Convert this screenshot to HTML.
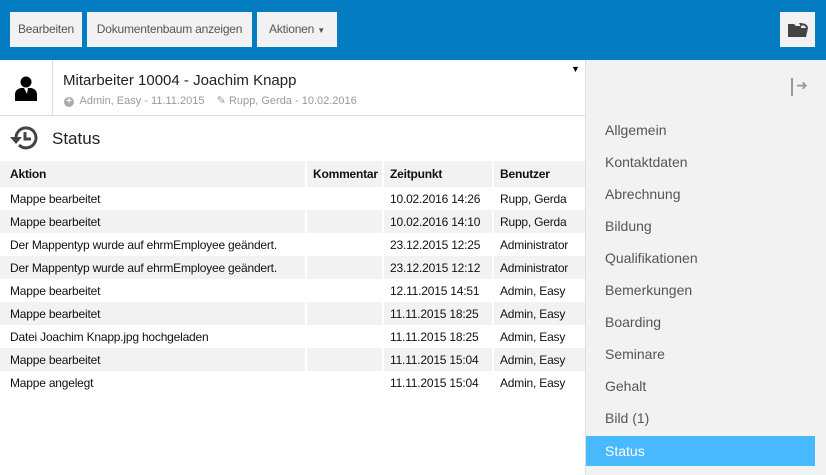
<!DOCTYPE html>
<html><head><style>
*{margin:0;padding:0;box-sizing:border-box}
body{width:826px;height:475px;overflow:hidden;font-family:"Liberation Sans",sans-serif;background:#fff;position:relative;color:#222}
.top{position:absolute;left:0;top:0;width:826px;height:60px;background:#037cc2}
.btn{position:absolute;top:12px;height:35px;background:#f2f2f2;color:#555;font-size:12px;line-height:35px;text-align:center;white-space:nowrap;letter-spacing:-0.2px}
.side{position:absolute;left:585px;top:60px;width:241px;height:415px;background:#f2f2f2;border-left:1px solid #ddd}
.side .it{position:absolute;left:19px;font-size:14px;color:#555}
.sel{position:absolute;left:0;top:376px;width:229px;height:30px;background:#47b9fc;color:#fff;font-size:14px;line-height:30px;padding-left:19px}
.hdr{position:absolute;left:0;top:60px;width:585px;height:56px;border-bottom:1px solid #ddd}
table{position:absolute;left:0;top:161px;width:585px;border-collapse:collapse;font-size:12px;table-layout:fixed;letter-spacing:-0.2px}
th{background:#f2f2f2;text-align:left;font-weight:bold;height:26px;padding:0 0 0 6px;border-left:2px solid #fff;color:#111;white-space:nowrap;overflow:hidden}
td{height:23px;padding:0 0 0 6px;border-left:2px solid #fff;color:#111;white-space:nowrap;overflow:hidden}
tr:nth-child(odd) td{background:#f2f2f2}
tr td:first-child,tr th:first-child{border-left:none;padding-left:10px}
</style></head><body>
<div class="top">
<div class="btn" style="left:10px;width:72px">Bearbeiten</div>
<div class="btn" style="left:87px;width:165px">Dokumentenbaum anzeigen</div>
<div class="btn" style="left:257px;width:80px">Aktionen <span style="font-size:8px">▼</span></div>
<div class="btn" style="left:780px;width:35px"><svg width="22" height="18" viewBox="0 0 22 18" style="margin-top:9px"><path d="M1 3h6l2 2h5v11H1z" fill="#444"/><path d="M3 7h18l-2 9H1z" fill="#444"/><path d="M14 4a4 4 0 0 1 6 3" stroke="#444" stroke-width="2" fill="none"/><path d="M12 2l3 0-1 4z" fill="#444"/></svg></div>
</div>
<div class="hdr">
<div style="position:absolute;left:52px;top:0;width:1px;height:55px;background:#ddd"></div>
<svg style="position:absolute;left:15px;top:16px" width="22" height="25" viewBox="0 0 22 25"><circle cx="11" cy="6" r="5.5" fill="#000"/><path d="M0 25v-6q0-6 6-7h10q6 1 6 7v6z" fill="#000"/><path d="M9 12h4l-1 6z" fill="#fff"/></svg>
<div style="position:absolute;left:63px;top:12px;font-size:15px;color:#222">Mitarbeiter 10004 - Joachim Knapp</div>
<div style="position:absolute;left:64px;top:34px;font-size:11px;color:#999;white-space:nowrap"><span style="display:inline-block;width:10px;height:10px;border-radius:50%;background:#aaa;color:#fff;font-size:10px;line-height:10px;text-align:center;font-weight:bold">+</span>&nbsp; Admin, Easy - 11.11.2015 &nbsp;&nbsp; ✎ Rupp, Gerda - 10.02.2016</div>
<div style="position:absolute;left:571px;top:4px;font-size:9px;color:#000">▼</div>
</div>
<svg style="position:absolute;left:10px;top:125px" width="30" height="26" viewBox="0 0 30 26"><path d="M6 13a10 10 0 1 1 3 7" stroke="#444" stroke-width="3" fill="none"/><path d="M0 12h12l-6 7z" fill="#444"/><path d="M15 7v7h6" stroke="#444" stroke-width="3" fill="none"/></svg>
<div style="position:absolute;left:52px;top:129px;font-size:17px;color:#222">Status</div>
<table>
<colgroup><col style="width:306px"><col style="width:77px"><col style="width:110px"><col style="width:92px"></colgroup>
<tr><th>Aktion</th><th>Kommentar</th><th>Zeitpunkt</th><th>Benutzer</th></tr>
<tr><td>Mappe bearbeitet</td><td></td><td>10.02.2016 14:26</td><td>Rupp, Gerda</td></tr>
<tr><td>Mappe bearbeitet</td><td></td><td>10.02.2016 14:10</td><td>Rupp, Gerda</td></tr>
<tr><td>Der Mappentyp wurde auf ehrmEmployee geändert.</td><td></td><td>23.12.2015 12:25</td><td>Administrator</td></tr>
<tr><td>Der Mappentyp wurde auf ehrmEmployee geändert.</td><td></td><td>23.12.2015 12:12</td><td>Administrator</td></tr>
<tr><td>Mappe bearbeitet</td><td></td><td>12.11.2015 14:51</td><td>Admin, Easy</td></tr>
<tr><td>Mappe bearbeitet</td><td></td><td>11.11.2015 18:25</td><td>Admin, Easy</td></tr>
<tr><td>Datei Joachim Knapp.jpg hochgeladen</td><td></td><td>11.11.2015 18:25</td><td>Admin, Easy</td></tr>
<tr><td>Mappe bearbeitet</td><td></td><td>11.11.2015 15:04</td><td>Admin, Easy</td></tr>
<tr><td>Mappe angelegt</td><td></td><td>11.11.2015 15:04</td><td>Admin, Easy</td></tr>
</table>
<div class="side">
<div style="position:absolute;left:205px;top:18px;width:2px;height:18px;background:#999"></div>
<div style="position:absolute;left:210px;top:17px;font-size:14px;color:#999">➜</div>
<div class="it" style="top:62px">Allgemein</div>
<div class="it" style="top:94px">Kontaktdaten</div>
<div class="it" style="top:126px">Abrechnung</div>
<div class="it" style="top:158px">Bildung</div>
<div class="it" style="top:190px">Qualifikationen</div>
<div class="it" style="top:222px">Bemerkungen</div>
<div class="it" style="top:254px">Boarding</div>
<div class="it" style="top:286px">Seminare</div>
<div class="it" style="top:318px">Gehalt</div>
<div class="it" style="top:350px">Bild (1)</div>
<div class="sel">Status</div>
</div>
</body></html>
